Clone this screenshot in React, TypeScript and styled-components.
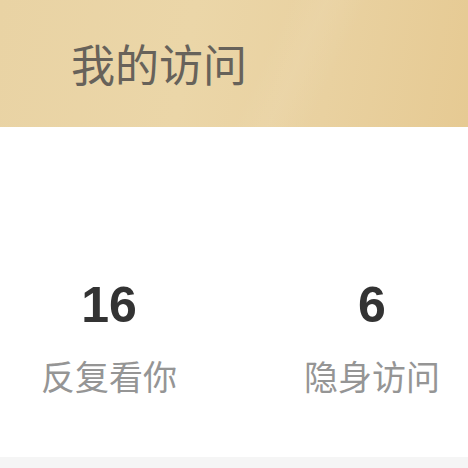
import React from "react";
import styled, { createGlobalStyle } from "styled-components";

const GlobalStyle = createGlobalStyle`
  html, body {
    margin: 0;
    padding: 0;
    background: #ffffff;
    font-family: "Noto Sans CJK SC", "Noto Sans", sans-serif;
  }
`;

const Page = styled.div`
  width: 468px;
  height: 468px;
  display: flex;
  flex-direction: column;
  background: #f5f5f5;
  overflow: hidden;
`;

const Header = styled.header`
  height: 127px;
  display: flex;
  align-items: center;
  padding-left: 71px;
  box-sizing: border-box;
  background:
    linear-gradient(115deg, transparent 55%, rgba(255, 255, 255, 0.06) 62%, transparent 70%),
    linear-gradient(100deg, #e9d3a4 0%, #ebd6a8 40%, #e9d1a0 70%, #e6ca93 100%);
  > h1 {
    margin: 0;
    margin-top: -2px;
    font-size: 44px;
    font-weight: 400;
    color: #67625a;
  }
`;

const Stats = styled.section`
  height: 330px;
  background: #ffffff;
  display: flex;
  justify-content: space-between;
  padding: 0 25px 0 38px;
  box-sizing: border-box;
`;

const Stat = styled.div`
  width: 142px;
  display: flex;
  flex-direction: column;
  align-items: center;
  padding-top: 150px;
`;

const Value = styled.div`
  font-family: "Liberation Sans", Arial, sans-serif;
  font-size: 50px;
  font-weight: 700;
  line-height: 56px;
  color: #333333;
`;

const Label = styled.div`
  margin-top: 22px;
  font-size: 34px;
  line-height: 42px;
  color: #959595;
  white-space: nowrap;
`;

const stats = [
  { value: "16", label: "反复看你" },
  { value: "6", label: "隐身访问" },
];

export default function App() {
  return (
    <Page>
      <GlobalStyle />
      <Header>
        <h1>我的访问</h1>
      </Header>
      <Stats>
        {stats.map((s) => (
          <Stat key={s.label}>
            <Value>{s.value}</Value>
            <Label>{s.label}</Label>
          </Stat>
        ))}
      </Stats>
    </Page>
  );
}
